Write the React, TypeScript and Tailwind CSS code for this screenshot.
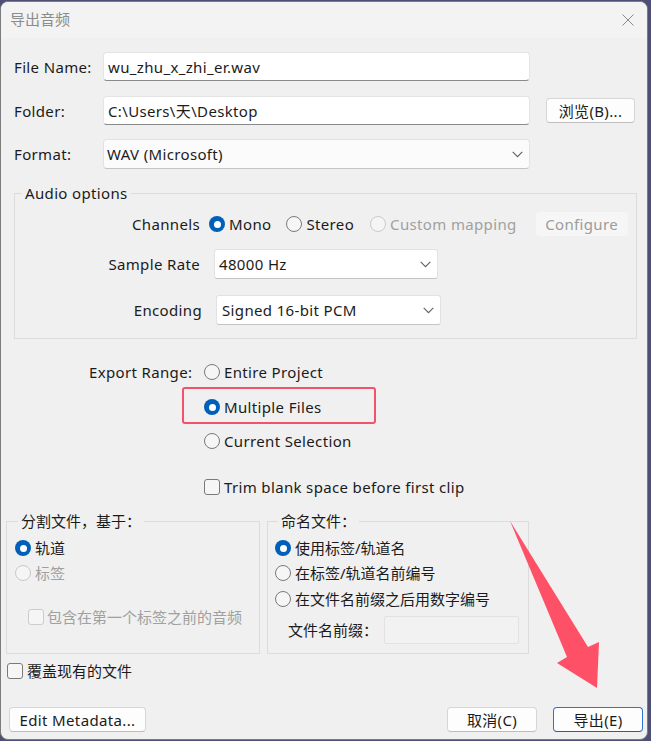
import React from "react";

function Radio({ checked, disabled }: { checked?: boolean; disabled?: boolean }) {
  if (checked)
    return (
      <span className="block w-4 h-4 rounded-full bg-[#005fb8] flex items-center justify-center shrink-0">
        <span className="block w-[7px] h-[7px] rounded-full bg-white" />
      </span>
    );
  return (
    <span
      className={
        disabled
          ? "block w-4 h-4 rounded-full border border-[#c9c9c9] bg-[#f5f5f5] shrink-0"
          : "block w-4 h-4 rounded-full border border-[#7a7a7a] bg-[#f6f6f6] shrink-0"
      }
    />
  );
}

function Check({ disabled }: { disabled?: boolean }) {
  return (
    <span
      className={
        disabled
          ? "block w-4 h-4 rounded-[3px] border border-[#cccccc] bg-[#f5f5f5] shrink-0"
          : "block w-4 h-4 rounded-[3px] border border-[#7a7a7a] bg-[#f6f6f6] shrink-0"
      }
    />
  );
}

function Chevron() {
  return (
    <svg width="11" height="7" viewBox="0 0 11 7" className="shrink-0">
      <path d="M0.7 0.8 L5.5 5.6 L10.3 0.8" fill="none" stroke="#606060" strokeWidth="1.1" />
    </svg>
  );
}

function Btn({ children, w, primary }: { children: React.ReactNode; w: string; primary?: boolean }) {
  return (
    <div
      className={
        (primary
          ? "border-[#2f74c8] border-b-[#1f5fae] "
          : "border-[#d6d6d6] border-b-[#bdbdbd] ") +
        w +
        " h-[25px] bg-[#fdfdfd] border rounded-[4px] flex items-center justify-center text-[15px] text-[#1b1b1b]"
      }
    >
      {children}
    </div>
  );
}

export default function App() {
  return (
    <div className="relative w-[651px] h-[741px] overflow-hidden bg-[#4d4f75] font-['Noto_Sans','Noto_Sans_CJK_SC',sans-serif] text-[15px] leading-[20px] text-[#1b1b1b] tracking-[0.35px]">
      <div className="mt-[1px] w-[648px] h-[739px] rounded-[8px] border border-[#7c7c7c] bg-[#f0f0f0] overflow-hidden flex flex-col">
        {/* title bar */}
        <div className="h-[36px] bg-[#f3f3f3] flex items-center justify-between pl-[9px] pr-[13px] shrink-0">
          <span className="text-[15px] text-[#8c8c8c] tracking-normal pb-[3px] font-['Noto_Sans_CJK_SC',sans-serif]">导出音频</span>
          <svg width="12" height="12" viewBox="0 0 12 12" className="mb-[1px]">
            <path d="M0.5 0.5 L11.5 11.5 M11.5 0.5 L0.5 11.5" stroke="#8a8a8a" strokeWidth="1" fill="none" />
          </svg>
        </div>

        {/* File name */}
        <div className="flex items-center pl-[13px] mt-[14px]">
          <span className="w-[89px]">File Name:</span>
          <div className="w-[427px] h-[29px] bg-white border border-[#e4e4e4] border-b-[#8a8a8a] rounded-[4px] flex items-center pl-[4px]">
            wu_zhu_x_zhi_er.wav
          </div>
        </div>

        {/* Folder */}
        <div className="flex items-center pl-[13px] mt-[15px]">
          <span className="w-[89px]">Folder:</span>
          <div className="w-[427px] h-[29px] bg-white border border-[#e4e4e4] border-b-[#8a8a8a] rounded-[4px] flex items-center pl-[4px]">
            C:\Users\天\Desktop
          </div>
          <div className="ml-[16px]">
            <Btn w="w-[89px]">浏览(B)...</Btn>
          </div>
        </div>

        {/* Format */}
        <div className="flex items-center pl-[13px] mt-[14px]">
          <span className="w-[89px]">Format:</span>
          <div className="w-[427px] h-[30px] bg-[#fbfbfb] border border-[#e2e2e2] border-b-[#c4c4c4] rounded-[4px] flex items-center justify-between pl-[3px] pr-[6px]">
            <span>WAV (Microsoft)</span>
            <Chevron />
          </div>
        </div>

        {/* Audio options */}
        <fieldset className="ml-[13px] w-[623px] mt-[14px] border border-[#dcdcdc] pb-[13px]">
          <legend className="ml-[7px] px-[3px]">Audio options</legend>
          <div className="flex items-center h-[24px] mt-[9px]">
            <span className="w-[185px] text-right">Channels</span>
            <span className="ml-[9px]"><Radio checked /></span>
            <span className="ml-[4px]">Mono</span>
            <span className="ml-[15px]"><Radio /></span>
            <span className="ml-[4px]">Stereo</span>
            <span className="ml-[16px]"><Radio disabled /></span>
            <span className="ml-[4px] text-[#a0a0a0]">Custom mapping</span>
            <div className="ml-[19px] w-[92px] h-[24px] bg-[#f6f6f6] rounded-[4px] flex items-center justify-center text-[#9c9c9c]">
              Configure
            </div>
          </div>
          <div className="flex items-center mt-[13px]">
            <span className="w-[185px] text-right">Sample Rate</span>
            <div className="ml-[14px] w-[224px] h-[30px] bg-white border border-[#e2e2e2] border-b-[#c4c4c4] rounded-[3px] flex items-center justify-between pl-[4px] pr-[6px]">
              <span>48000 Hz</span>
              <Chevron />
            </div>
          </div>
          <div className="flex items-center mt-[16px]">
            <span className="w-[187px] text-right">Encoding</span>
            <div className="ml-[14px] w-[225px] h-[30px] bg-white border border-[#e2e2e2] border-b-[#c4c4c4] rounded-[3px] flex items-center justify-between pl-[5px] pr-[6px]">
              <span>Signed 16-bit PCM</span>
              <Chevron />
            </div>
          </div>
        </fieldset>

        {/* Export range */}
        <div className="flex pl-[88px] mt-[23px]">
          <span className="w-[115px] h-[20px] flex items-center">Export Range:</span>
          <div className="flex flex-col">
            <div className="flex items-center h-[20px]">
              <Radio />
              <span className="ml-[4px]">Entire Project</span>
            </div>
            <div className="relative flex items-center h-[20px] mt-[15px]">
              <Radio checked />
              <span className="ml-[4px]">Multiple Files</span>
              <div className="absolute left-[-22px] top-[-10px] w-[194px] h-[37px] border-2 border-[#f4516c] rounded-[3px]" />
            </div>
            <div className="flex items-center h-[20px] mt-[14px]">
              <Radio />
              <span className="ml-[4px]">Current Selection</span>
            </div>
            <div className="flex items-center h-[20px] mt-[26px]">
              <Check />
              <span className="ml-[4px]">Trim blank space before first clip</span>
            </div>
          </div>
        </div>

        {/* Split / naming groups */}
        <div className="flex mt-[14px] tracking-normal">
          <fieldset className="ml-[5px] w-[254px] h-[143px] border border-[#dcdcdc] pl-[8px]">
            <legend className="ml-[3px] px-[3px]">分割文件，基于：</legend>
            <div className="flex items-center h-[20px] mt-[7px]">
              <Radio checked />
              <span className="ml-[4px]">轨道</span>
            </div>
            <div className="flex items-center h-[20px] mt-[5px]">
              <Radio disabled />
              <span className="ml-[4px] text-[#a0a0a0]">标签</span>
            </div>
            <div className="flex items-center h-[20px] mt-[24px] ml-[13px]">
              <Check disabled />
              <span className="ml-[3px] text-[#a0a0a0]">包含在第一个标签之前的音频</span>
            </div>
          </fieldset>
          <fieldset className="ml-[7px] w-[262px] h-[143px] border border-[#dcdcdc] pl-[7px]">
            <legend className="ml-[3px] px-[3px]">命名文件：</legend>
            <div className="flex items-center h-[20px] mt-[7px]">
              <Radio checked />
              <span className="ml-[4px]">使用标签/轨道名</span>
            </div>
            <div className="flex items-center h-[20px] mt-[5px]">
              <Radio />
              <span className="ml-[4px]">在标签/轨道名前编号</span>
            </div>
            <div className="flex items-center h-[20px] mt-[6px]">
              <Radio />
              <span className="ml-[4px]">在文件名前缀之后用数字编号</span>
            </div>
            <div className="flex items-center mt-[7px] ml-[13px]">
              <span className="w-[96px]">文件名前缀：</span>
              <div className="w-[135px] h-[28px] border border-[#e2e2e2] bg-[#f2f2f2] rounded-[2px]" />
            </div>
          </fieldset>
        </div>

        {/* overwrite */}
        <div className="flex items-center h-[20px] mt-[7px] pl-[6px] tracking-normal">
          <Check />
          <span className="ml-[4px]">覆盖现有的文件</span>
        </div>

        {/* buttons */}
        <div className="flex items-center mt-[26px] pl-[8px] pr-[4px]">
          <Btn w="w-[137px]">Edit Metadata...</Btn>
          <div className="ml-auto">
            <Btn w="w-[90px]">取消(C)</Btn>
          </div>
          <div className="ml-[16px]">
            <Btn w="w-[90px]" primary>导出(E)</Btn>
          </div>
        </div>
      </div>

      {/* red arrow annotation */}
      <svg className="absolute left-0 top-0 pointer-events-none" width="651" height="741" viewBox="0 0 651 741">
        <polygon points="510,521 588,647 599,642 597,688 557,663 567,657" fill="#fe5067" />
      </svg>
    </div>
  );
}
